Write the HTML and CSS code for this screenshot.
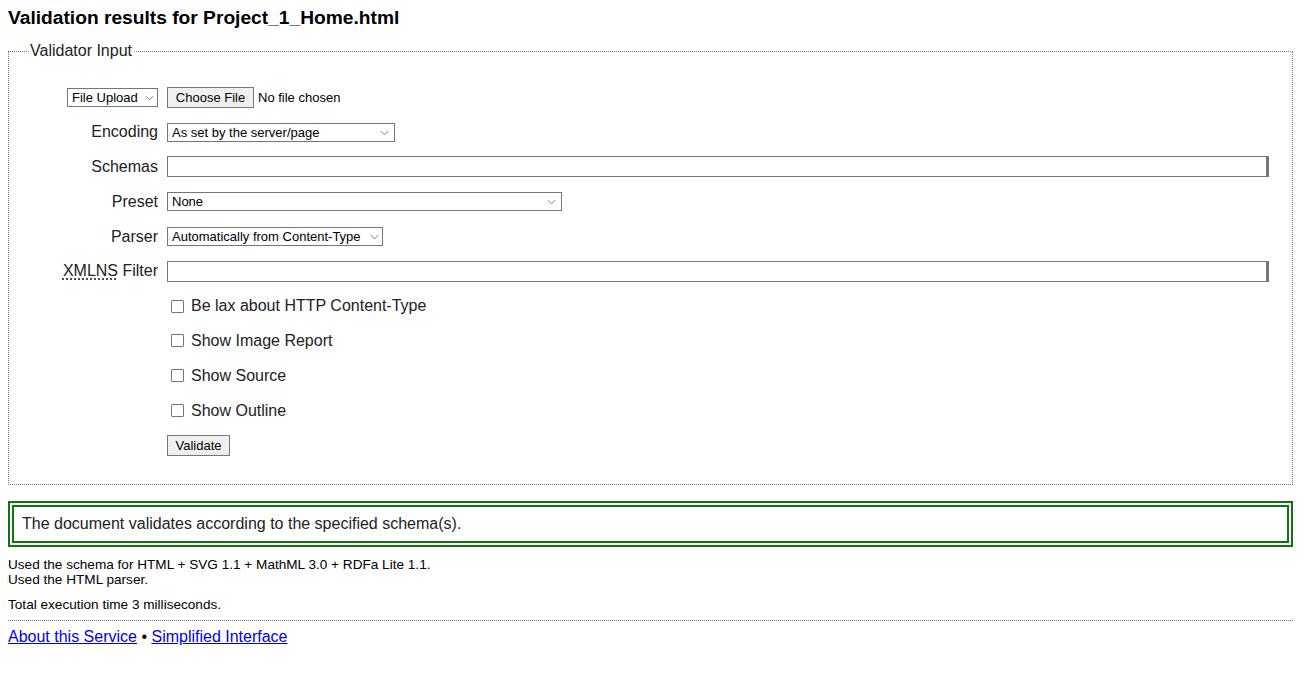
FILE: index.html
```html
<!DOCTYPE html>
<html lang="en">
<head>
<meta charset="utf-8">
<title>Validation results for Project_1_Home.html</title>
<link rel="stylesheet" href="styles.css">
</head>
<body>
<h2 class="title">Validation results for Project_1_Home.html</h2>
<form class="form">
  <fieldset class="fs">
    <legend class="legend">Validator Input</legend>
    <div class="rows">
      <div class="label">
        <span class="sel sel-src"><select class="select"><option>File Upload</option></select><svg class="chev" viewBox="0 0 10 6" width="9" height="6"><path d="M1 1l4 4 4-4" fill="none" stroke="#777" stroke-width="1.1"/></svg></span>
      </div>
      <div class="ctrl">
        <button type="button" class="btn btn-file">Choose File</button><span class="nofile">No file chosen</span>
      </div>

      <div class="label">Encoding</div>
      <div class="ctrl"><span class="sel sel-enc"><select class="select"><option>As set by the server/page</option></select><svg class="chev" viewBox="0 0 10 6" width="9" height="6"><path d="M1 1l4 4 4-4" fill="none" stroke="#777" stroke-width="1.1"/></svg></span></div>

      <div class="label">Schemas</div>
      <div class="ctrl"><input class="text" type="text"></div>

      <div class="label">Preset</div>
      <div class="ctrl"><span class="sel sel-pre"><select class="select"><option>None</option></select><svg class="chev" viewBox="0 0 10 6" width="9" height="6"><path d="M1 1l4 4 4-4" fill="none" stroke="#777" stroke-width="1.1"/></svg></span></div>

      <div class="label">Parser</div>
      <div class="ctrl"><span class="sel sel-par"><select class="select"><option>Automatically from Content-Type</option></select><svg class="chev" viewBox="0 0 10 6" width="9" height="6"><path d="M1 1l4 4 4-4" fill="none" stroke="#777" stroke-width="1.1"/></svg></span></div>

      <div class="label"><span><abbr class="abbr" title="XML namespaces">XMLNS</abbr> Filter</span></div>
      <div class="ctrl"><input class="text" type="text"></div>

      <div class="label"></div>
      <div class="ctrl"><label class="check"><span class="box"></span>Be lax about HTTP Content-Type</label></div>

      <div class="label"></div>
      <div class="ctrl"><label class="check"><span class="box"></span>Show Image Report</label></div>

      <div class="label"></div>
      <div class="ctrl"><label class="check"><span class="box"></span>Show Source</label></div>

      <div class="label"></div>
      <div class="ctrl"><label class="check"><span class="box"></span>Show Outline</label></div>

      <div class="label"></div>
      <div class="ctrl"><button type="button" class="btn btn-val">Validate</button></div>
    </div>
  </fieldset>
</form>
<p class="success">The document validates according to the specified schema(s).</p>
<p class="stats">Used the schema for HTML + SVG 1.1 + MathML 3.0 + RDFa Lite 1.1.<br>Used the HTML parser.</p>
<p class="stats time">Total execution time 3 milliseconds.</p>
<hr class="rule">
<p class="foot"><a href="#" class="link">About this Service</a> • <a href="#" class="link">Simplified Interface</a></p>
</body>
</html>
```
FILE: styles.css
```css
html, body {
  margin: 0;
  padding: 0;
  background: #fff;
}
body {
  padding: 8px;
  width: 1285px;
  font-family: "Liberation Sans", Arial, sans-serif;
  color: #000;
  font-size: 16px;
}
.title {
  margin: 0;
  font-size: 19.2px;
  line-height: 20px;
  font-weight: bold;
  color: #000;
}
.form {
  margin: 14px 0 0 0;
}
.fs {
  margin: 0;
  border: 1px dotted #777;
  padding: 20px 12px 21px 12px;
  min-width: 0;
}
.legend {
  padding: 0 1px;
  margin-left: 8px;
  font-size: 16px;
  line-height: 18px;
  color: #222;
}
.rows {
  display: grid;
  grid-template-columns: 137px 1fr;
  column-gap: 9px;
  grid-auto-rows: 34.8px;
  align-items: center;
}
.label {
  text-align: right;
  font-size: 16px;
  line-height: 18px;
  color: #222;
  display: flex;
  justify-content: flex-end;
  align-items: center;
}
.ctrl {
  display: flex;
  align-items: center;
}
.sel {
  position: relative;
  display: inline-block;
  height: 19px;
}
.select {
  appearance: none;
  -webkit-appearance: none;
  box-sizing: border-box;
  height: 19px;
  width: 100%;
  margin: 0;
  border: 1px solid #767676;
  border-radius: 0;
  background: #fff;
  font-family: "Liberation Sans", Arial, sans-serif;
  font-size: 13px;
  line-height: 15px;
  padding: 0 18px 0 4px;
  color: #000;
}
.chev {
  position: absolute;
  right: 6px;
  top: 7px;
}
.sel-src { width: 91px; }
.sel-enc { width: 228px; }
.sel-pre { width: 395px; }
.sel-par { width: 216px; }
.sel-src .chev, .sel-par .chev { right: 4px; }
.btn {
  box-sizing: border-box;
  margin: 0;
  font-family: "Liberation Sans", Arial, sans-serif;
  font-size: 13px;
  line-height: 15px;
  color: #000;
  background: #efefef;
  border: 1px solid #767676;
  border-radius: 0;
  padding: 0 7px;
}
.btn-file {
  height: 21px;
  width: 87px;
}
.nofile {
  margin-left: 4px;
  font-size: 13px;
  color: #000;
}
.btn-val {
  height: 21px;
  width: 63px;
}
.text {
  box-sizing: border-box;
  width: 1102px;
  height: 21px;
  margin: 0;
  border: 1px solid #767676;
  border-right: 3px solid #767676;
  border-radius: 0;
  padding: 0 4px;
  font-family: "Liberation Sans", Arial, sans-serif;
  font-size: 13px;
}
.abbr {
  text-decoration: underline dotted;
  text-underline-offset: 2px;
}
.check {
  display: flex;
  align-items: center;
  font-size: 16px;
  line-height: 18px;
  color: #222;
}
.box {
  box-sizing: border-box;
  width: 13px;
  height: 13px;
  border: 1px solid #767676;
  border-radius: 1px;
  margin: 0 7px 0 4px;
  background: #fff;
}
.success {
  margin: 16px 0 0 0;
  border: 6px double #137313;
  padding: 8px;
  font-size: 16px;
  line-height: 18px;
  color: #222;
}
.stats {
  margin: 10px 0 0 0;
  font-size: 13.6px;
  line-height: 15px;
  color: #000;
}
.time {
  margin-top: 10px;
}
.rule {
  margin: 8px 0 0 0;
  border: 0;
  border-top: 1px dotted #777;
  height: 0;
}
.foot {
  margin: 7px 0 0 0;
  font-size: 16px;
  line-height: 18px;
}
.link {
  color: #0000ee;
  text-decoration: underline;
}
```
